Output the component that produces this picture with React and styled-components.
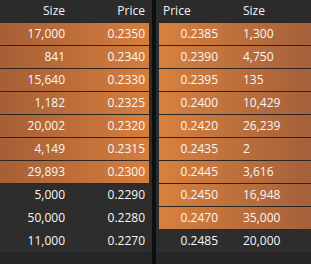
import React from "react";
import styled, { createGlobalStyle } from "styled-components";

const bids = [
  { size: "17,000", price: "0.2350", hot: true },
  { size: "841", price: "0.2340", hot: true },
  { size: "15,640", price: "0.2330", hot: true },
  { size: "1,182", price: "0.2325", hot: true },
  { size: "20,002", price: "0.2320", hot: true },
  { size: "4,149", price: "0.2315", hot: true },
  { size: "29,893", price: "0.2300", hot: true },
  { size: "5,000", price: "0.2290" },
  { size: "50,000", price: "0.2280" },
  { size: "11,000", price: "0.2270" },
];

const asks = [
  { price: "0.2385", size: "1,300", hot: true },
  { price: "0.2390", size: "4,750", hot: true },
  { price: "0.2395", size: "135", hot: true },
  { price: "0.2400", size: "10,429", hot: true },
  { price: "0.2420", size: "26,239", hot: true },
  { price: "0.2435", size: "2", hot: true },
  { price: "0.2445", size: "3,616", hot: true },
  { price: "0.2450", size: "16,948", hot: true },
  { price: "0.2470", size: "35,000", hot: true },
  { price: "0.2485", size: "20,000" },
];

function App() {
  return (
    <>
      <Global />
      <Book>
        <Panel $side="left">
          <HeadRow>
            <LeftSize>Size</LeftSize>
            <LeftPrice>Price</LeftPrice>
          </HeadRow>
          {bids.map((b, i) => (
            <Row key={i} $hot={b.hot} $side="left">
              <LeftSize>{b.size}</LeftSize>
              <LeftPrice>{b.price}</LeftPrice>
            </Row>
          ))}
        </Panel>
        <Divider />
        <Panel $side="right">
          <HeadRow>
            <RightPrice>Price</RightPrice>
            <RightSize>Size</RightSize>
          </HeadRow>
          {asks.map((a, i) => (
            <Row key={i} $hot={a.hot} $side="right">
              <RightPrice $data>{a.price}</RightPrice>
              <RightSize>{a.size}</RightSize>
            </Row>
          ))}
        </Panel>
      </Book>
    </>
  );
}

export default App;

const Global = createGlobalStyle`
  body {
    margin: 0;
    background: #242424;
    font-family: "Open Sans", "Noto Sans", sans-serif;
  }
`;

const Book = styled.div`
  display: flex;
  width: 311px;
  height: 264px;
  overflow: hidden;
  background: #242424;
`;

const Panel = styled.div`
  display: flex;
  flex-direction: column;
  width: ${(p) => (p.$side === "left" ? "152px" : "auto")};
  flex: ${(p) => (p.$side === "left" ? "none" : "1")};
  padding: ${(p) => (p.$side === "left" ? "0 3px 0 0" : "0 0 0 3px")};
  box-sizing: border-box;
  background: linear-gradient(to bottom, #2c2c2c 0, #2c2c2c 252px, #262626 252px);
`;

const Divider = styled.div`
  width: 4px;
  flex: none;
  background: #0e0e0e;
`;

const HeadRow = styled.div`
  display: flex;
  height: 22px;
  line-height: 22px;
  font-size: 12px;
  color: #f2f2f2;
  background: #2b2b2b;
`;

const Row = styled.div`
  display: flex;
  height: 22px;
  line-height: 22px;
  font-size: 12px;
  color: #f7f7f7;
  border-top: 1px solid ${(p) => (p.$hot ? "#2b2622" : "#292929")};
  background: ${(p) =>
    !p.$hot
      ? "#2d2d2d"
      : p.$side === "left"
      ? "linear-gradient(to right, #a65f36, #d67d3d)"
      : "linear-gradient(to right, #d8803e, #a4603a)"};
`;

const LeftSize = styled.div`
  width: 69px;
  padding-right: 4px;
  box-sizing: border-box;
  text-align: right;
`;

const LeftPrice = styled.div`
  flex: 1;
  padding-right: 4px;
  text-align: right;
`;

const RightPrice = styled.div`
  width: 80px;
  flex: none;
  box-sizing: border-box;
  padding: ${(p) => (p.$data ? "0 21px 0 0" : "0 0 0 4px")};
  text-align: ${(p) => (p.$data ? "right" : "left")};
`;

const RightSize = styled.div`
  flex: 1;
  padding-left: 4px;
  text-align: left;
`;
